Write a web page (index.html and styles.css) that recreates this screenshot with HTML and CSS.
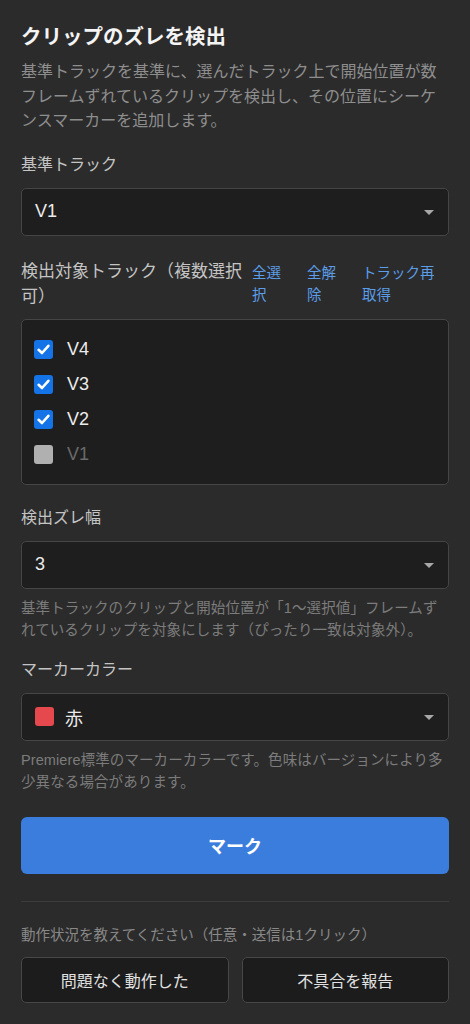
FILE: index.html
```html
<!DOCTYPE html>
<html lang="ja">
<head>
<meta charset="utf-8">
<title>クリップのズレを検出</title>
<link rel="stylesheet" href="styles.css">
</head>
<body>
<main class="panel">
  <h1 class="title">クリップのズレを検出</h1>
  <p class="desc">基準トラックを基準に、選んだトラック上で開始位置が数フレームずれているクリップを検出し、その位置にシーケンスマーカーを追加します。</p>

  <section class="field f1">
    <div class="label">基準トラック</div>
    <div class="select"><span class="value">V1</span><span class="arrow"></span></div>
  </section>

  <section class="field f2">
    <div class="label-row">
      <div class="label big">検出対象トラック（複数選択可）</div>
      <div class="links">
        <a class="link l1">全選択</a>
        <a class="link l2">全解除</a>
        <a class="link l3">トラック再取得</a>
      </div>
    </div>
    <div class="checklist">
      <div class="check-row"><span class="cb on"><svg viewBox="0 0 19 19"><path d="M4.6 9.8 L8 13 L14.4 5.8" fill="none" stroke="#fff" stroke-width="2.6" stroke-linecap="round" stroke-linejoin="round"/></svg></span><span class="track">V4</span></div>
      <div class="check-row"><span class="cb on"><svg viewBox="0 0 19 19"><path d="M4.6 9.8 L8 13 L14.4 5.8" fill="none" stroke="#fff" stroke-width="2.6" stroke-linecap="round" stroke-linejoin="round"/></svg></span><span class="track">V3</span></div>
      <div class="check-row"><span class="cb on"><svg viewBox="0 0 19 19"><path d="M4.6 9.8 L8 13 L14.4 5.8" fill="none" stroke="#fff" stroke-width="2.6" stroke-linecap="round" stroke-linejoin="round"/></svg></span><span class="track">V2</span></div>
      <div class="check-row disabled"><span class="cb off"></span><span class="track">V1</span></div>
    </div>
  </section>

  <section class="field f3">
    <div class="label">検出ズレ幅</div>
    <div class="select"><span class="value">3</span><span class="arrow"></span></div>
    <p class="hint">基準トラックのクリップと開始位置が「1〜選択値」フレームずれているクリップを対象にします（ぴったり一致は対象外）。</p>
  </section>

  <section class="field f4">
    <div class="label">マーカーカラー</div>
    <div class="select"><span class="swatch"></span><span class="value">赤</span><span class="arrow"></span></div>
    <p class="hint">Premiere標準のマーカーカラーです。色味はバージョンにより多少異なる場合があります。</p>
  </section>

  <button class="primary">マーク</button>

  <hr class="divider">

  <p class="caption">動作状況を教えてください（任意・送信は1クリック）</p>
  <div class="feedback">
    <button class="secondary">問題なく動作した</button>
    <button class="secondary">不具合を報告</button>
  </div>
</main>
</body>
</html>
```

FILE: styles.css
```css
* { box-sizing: border-box; }

html, body {
  margin: 0;
  padding: 0;
  background: #2b2b2b;
}

body {
  font-family: "Liberation Sans", "Noto Sans CJK JP", sans-serif;
  color: #e6e6e6;
}

.panel {
  display: flex;
  flex-direction: column;
  padding: 23px 21px 0 21px;
  width: 470px;
}

.title {
  margin: 0;
  height: 28px;
  font-size: 20.5px;
  line-height: 28px;
  font-weight: 700;
  color: #f4f4f4;
}

.desc {
  margin: 9px 0 0 0;
  height: 73.5px;
  font-size: 16px;
  line-height: 24.5px;
  color: #8e8e8e;
}

.field {
  display: flex;
  flex-direction: column;
}

.f1 { margin-top: 19px; }
.f2 { margin-top: 23px; }
.f3 { margin-top: 21px; }
.f4 { margin-top: 17px; }

.label {
  height: 24px;
  font-size: 16px;
  line-height: 24px;
  color: #c4c4c4;
  margin-bottom: 11px;
}

.label-row {
  display: flex;
  align-items: center;
  height: 50px;
  margin-bottom: 10px;
}

.label.big {
  height: 50px;
  font-size: 17px;
  line-height: 25px;
  flex: 1;
  min-width: 0;
  margin-bottom: 0;
}

.links {
  display: flex;
  gap: 24px;
  flex: none;
  height: 44px;
  padding-right: 7px;
}

.link {
  height: 44px;
  font-size: 14.5px;
  line-height: 22px;
  color: #5b9de8;
  cursor: pointer;
}

.l1 { width: 31px; }
.l2 { width: 31px; }
.l3 { width: 80px; }

.select {
  display: flex;
  align-items: center;
  height: 48px;
  background: #1e1e1e;
  border: 1px solid #454545;
  border-radius: 5px;
  padding: 0 13px 0 13px;
  flex: none;
}

.select .value {
  flex: 1;
  font-size: 18px;
  color: #ececec;
}

.swatch {
  width: 19px;
  height: 19px;
  border-radius: 3px;
  background: #e5484d;
  margin-right: 11px;
  flex: none;
}

.arrow {
  width: 0;
  height: 0;
  border-left: 5px solid transparent;
  border-right: 5px solid transparent;
  border-top: 5px solid #a8a8a8;
  margin-right: 1px;
  margin-top: 2px;
}

.checklist {
  background: #1e1e1e;
  border: 1px solid #454545;
  border-radius: 5px;
  padding: 12px 12px;
}

.check-row {
  display: flex;
  align-items: center;
  height: 35px;
}

.cb {
  width: 19px;
  height: 19px;
  border-radius: 3px;
  flex: none;
  display: block;
}

.cb svg { width: 19px; height: 19px; display: block; }

.cb.on { background: #1473e6; }
.cb.off { background: #b0b0b0; }

.track {
  margin-left: 14px;
  font-size: 18px;
  color: #ececec;
}

.disabled .track { color: #6a6a6a; }

.hint {
  margin: 8px 0 0 0;
  height: 44px;
  font-size: 14.5px;
  line-height: 22px;
  letter-spacing: 0.1px;
  color: #7c7c7c;
}

.primary {
  margin-top: 24px;
  height: 57px;
  flex: none;
  border: none;
  border-radius: 6px;
  background: #3b7ddd;
  color: #ffffff;
  font-family: inherit;
  font-size: 18px;
  font-weight: 700;
}

.divider {
  margin: 27px 0 0 0;
  border: none;
  border-top: 1px solid #3c3c3c;
  height: 0;
}

.caption {
  margin: 22px 0 0 0;
  height: 22px;
  font-size: 14.5px;
  line-height: 22px;
  color: #888888;
}

.feedback {
  display: flex;
  gap: 13px;
  margin-top: 11px;
}

.secondary {
  flex: 1;
  height: 46px;
  background: #1c1c1c;
  border: 1px solid #474747;
  border-radius: 5px;
  color: #e2e2e2;
  font-family: inherit;
  font-size: 16px;
}
```
